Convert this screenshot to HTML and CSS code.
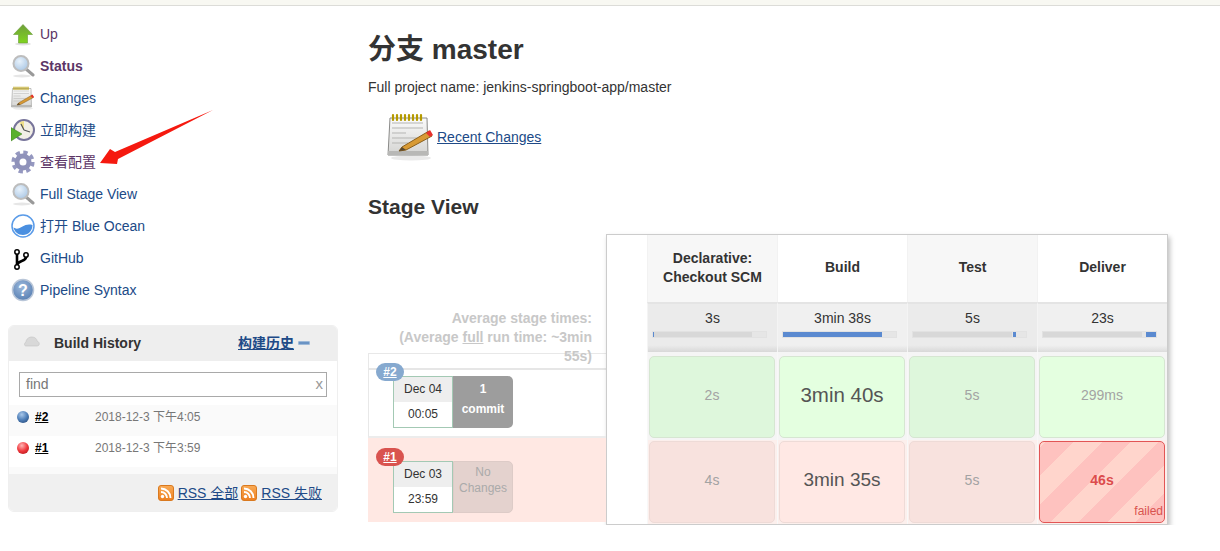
FILE: index.html
```html
<!DOCTYPE html>
<html lang="en">
<head>
  <meta charset="UTF-8">
  <title>分支 master</title>
  <link rel="stylesheet" href="styles.css">
</head>
<body>
  <svg class="sprite" aria-hidden="true">
    <defs>
      <linearGradient id="g-green" x1="0" y1="0" x2="0" y2="1"><stop offset="0" stop-color="#6f9f3a"/><stop offset="1" stop-color="#7fd41e"/></linearGradient>
      <radialGradient id="g-lens" cx=".4" cy=".35" r=".7"><stop offset="0" stop-color="#e8f2fb"/><stop offset="1" stop-color="#a9c6e4"/></radialGradient>
      <linearGradient id="g-paper" x1="0" y1="0" x2="0" y2="1"><stop offset="0" stop-color="#fbfbfb"/><stop offset="1" stop-color="#d4d4d2"/></linearGradient>
      <linearGradient id="g-rss" x1="0" y1="0" x2="0" y2="1"><stop offset="0" stop-color="#f9ab56"/><stop offset="1" stop-color="#ee7f1f"/></linearGradient>
      <radialGradient id="g-help" cx=".45" cy=".35" r=".75"><stop offset="0" stop-color="#9db9dc"/><stop offset="1" stop-color="#4f78ad"/></radialGradient>
      <radialGradient id="g-blue" cx=".4" cy=".3" r=".75"><stop offset="0" stop-color="#a9c8ea"/><stop offset=".6" stop-color="#4f7fb8"/><stop offset="1" stop-color="#2f5688"/></radialGradient>
      <radialGradient id="g-red" cx=".4" cy=".3" r=".75"><stop offset="0" stop-color="#ffb5b5"/><stop offset=".6" stop-color="#f03a3f"/><stop offset="1" stop-color="#c01a20"/></radialGradient>
      <symbol id="i-search" viewBox="0 0 24 24">
        <ellipse cx="11" cy="22" rx="9" ry="1.5" fill="#e6e6e6"/>
        <line x1="15" y1="15" x2="22" y2="21" stroke="#999" stroke-width="3" stroke-linecap="round"/>
        <circle cx="10" cy="9.500" r="7.500" fill="url(#g-lens)" stroke="#bdbdbd" stroke-width="2"/>
      </symbol>
      <symbol id="i-notepad" viewBox="0 0 48 48">
        <ellipse cx="24" cy="45" rx="20" ry="2.500" fill="#eaeaea"/>
        <path d="M3 5h37l1 37H1z" fill="url(#g-paper)" stroke="#8a8a88" stroke-width="1"/>
        <path d="M1 38h40v4H1z" fill="#b8b8b6"/>
        <path d="M5 10h31M5 15h31M5 20h14M5 25h25M5 30h16" stroke="#b5b5b3" stroke-width="1"/>
        <path d="M6 2v5M10 2v5M14 2v5M18 2v5M22 2v5M26 2v5M30 2v5M34 2v5" stroke="#b59a00" stroke-width="2.200" stroke-linecap="round"/>
        <path d="M15 34l27-16 3 5-26 14-7 1z" fill="#d89a34" stroke="#8a5f1c" stroke-width="1"/>
        <path d="M39 20l4-3 3 5-3 2z" fill="#e8302c"/>
        <path d="M15 34l-3 4 7-1z" fill="#5a4a30"/>
      </symbol>
      <symbol id="i-rss" viewBox="0 0 16 16">
        <rect x=".5" y=".5" width="15" height="15" rx="2.500" fill="url(#g-rss)" stroke="#d9791f" stroke-width="1"/>
        <circle cx="4.500" cy="11.500" r="1.700" fill="#fff"/>
        <path d="M3 7a6 6 0 0 1 6 6M3 3.500a9.500 9.500 0 0 1 9.500 9.500" fill="none" stroke="#fff" stroke-width="1.900"/>
      </symbol>
    </defs>
  </svg>

  <div class="top-strip"></div>

  <div class="page">
    <aside class="side">
      <nav class="tasks">
        <a class="task visited" href="#">
          <svg class="task-icon" viewBox="0 0 24 24">
            <ellipse cx="12" cy="22" rx="8" ry="1.500" fill="#e2e2e2"/>
            <path d="M12 2.500l9.500 10h-5v8.500h-9v-8.500h-5z" fill="url(#g-green)" stroke="#6a9a3a" stroke-width=".6"/>
          </svg>
          <span>Up</span>
        </a>
        <a class="task visited current" href="#">
          <svg class="task-icon"><use href="#i-search"/></svg>
          <span>Status</span>
        </a>
        <a class="task" href="#">
          <svg class="task-icon"><use href="#i-notepad"/></svg>
          <span>Changes</span>
        </a>
        <a class="task" href="#">
          <svg class="task-icon" viewBox="0 0 24 24">
            <circle cx="13" cy="12" r="10" fill="#f2efe6" stroke="#77749a" stroke-width="2"/>
            <path d="M13 12L8.500 4.500A9 9 0 0 1 13 3z" fill="#f0e08a"/>
            <path d="M13 12l-3-6M13 12l6 2" stroke="#555" stroke-width="1.200"/>
            <path d="M0 9.500l11 6.500L0 23z" fill="#59b02c" stroke="#3f7f20" stroke-width=".5"/>
          </svg>
          <span>立即构建</span>
        </a>
        <a class="task visited" href="#">
          <svg class="task-icon" viewBox="0 0 24 24">
            <circle cx="12" cy="12" r="9.800" fill="none" stroke="#9598c0" stroke-width="3.600" stroke-dasharray="4.300 3.400"/>
            <circle cx="12" cy="12" r="6" fill="none" stroke="#8f92ba" stroke-width="5"/>
          </svg>
          <span>查看配置</span>
        </a>
        <a class="task" href="#">
          <svg class="task-icon"><use href="#i-search"/></svg>
          <span>Full Stage View</span>
        </a>
        <a class="task" href="#">
          <svg class="task-icon" viewBox="0 0 24 24">
            <circle cx="12" cy="12" r="11" fill="#fff" stroke="#5a9be8" stroke-width="1.500"/>
            <path d="M2.500 13.500c3 2.200 6 .8 9-1s6-2.500 10-1.500c0 6-4.500 10-9.500 10s-8.700-3.500-9.500-7.500z" fill="#4a8fe0"/>
          </svg>
          <span>打开 Blue Ocean</span>
        </a>
        <a class="task" href="#">
          <svg class="task-icon" viewBox="0 0 24 24">
            <path d="M6 8v11M15 11c0 5-8 3-9 8" fill="none" stroke="#000" stroke-width="2.600"/>
            <circle cx="6" cy="6" r="2.200" fill="#fff" stroke="#000" stroke-width="1.500"/>
            <circle cx="6" cy="21" r="2.200" fill="#fff" stroke="#000" stroke-width="1.500"/>
            <circle cx="15" cy="9" r="2.200" fill="#fff" stroke="#000" stroke-width="1.500"/>
          </svg>
          <span>GitHub</span>
        </a>
        <a class="task" href="#">
          <svg class="task-icon" viewBox="0 0 24 24">
            <circle cx="12" cy="12" r="10.500" fill="url(#g-help)" stroke="#b9c6d8" stroke-width="1.500"/>
            <text class="help-mark" x="12" y="17.500" text-anchor="middle">?</text>
          </svg>
          <span>Pipeline Syntax</span>
        </a>
      </nav>

      <section class="history">
        <header class="history-head">
          <svg class="cloud" viewBox="0 0 16 12">
            <path d="M2 11c-2 0-2-3 0-4 0-3 3-5 6-5 3 0 5 2 5 4 3 1 3 5 0 5z" fill="#d8d8d8" stroke="#c4c4c4" stroke-width=".6"/>
          </svg>
          <span class="history-title">Build History</span>
          <a class="trend-link" href="#">构建历史</a>
          <span class="collapse"></span>
        </header>
        <div class="history-search">
          <div class="find-box"><span>find</span><span class="find-x">x</span></div>
        </div>
        <div class="build-row shaded">
          <svg class="ball" viewBox="0 0 14 14"><circle cx="7" cy="7" r="6" fill="url(#g-blue)"/></svg>
          <a class="build-num" href="#">#2</a>
          <span class="build-date">2018-12-3 下午4:05</span>
        </div>
        <div class="build-row">
          <svg class="ball" viewBox="0 0 14 14"><circle cx="7" cy="7" r="6" fill="url(#g-red)"/></svg>
          <a class="build-num" href="#">#1</a>
          <span class="build-date">2018-12-3 下午3:59</span>
        </div>
        <div class="history-gap"></div>
        <footer class="history-foot">
          <svg class="rss"><use href="#i-rss"/></svg>
          <a href="#">RSS 全部</a>
          <svg class="rss"><use href="#i-rss"/></svg>
          <a href="#">RSS 失败</a>
        </footer>
      </section>
    </aside>

    <main class="main">
      <h1>分支 master</h1>
      <p class="full-name">Full project name: jenkins-springboot-app/master</p>
      <div class="recent">
        <svg class="recent-icon"><use href="#i-notepad"/></svg>
        <a href="#">Recent Changes</a>
      </div>
      <h2>Stage View</h2>

      <div class="stage-view">
        <div class="runs">
          <div class="avg-note">
            Average stage times:<br>
            (Average <u>full</u> run time: ~3min 55s)
          </div>
          <div class="runs-top"></div>
          <div class="run">
            <a class="run-badge badge-blue" href="#">#2</a>
            <div class="run-date"><span class="day">Dec 04</span><span class="time">00:05</span></div>
            <div class="run-changes has-commit"><b>1</b><b>commit</b></div>
          </div>
          <div class="run run-failed">
            <a class="run-badge badge-red" href="#">#1</a>
            <div class="run-date"><span class="day">Dec 03</span><span class="time">23:59</span></div>
            <div class="run-changes no-changes"><span>No</span><span>Changes</span></div>
          </div>
        </div>

        <div class="stage-table">
          <div class="blank"></div>
          <div class="stage-name odd">Declarative:<br>Checkout SCM</div>
          <div class="stage-name">Build</div>
          <div class="stage-name odd">Test</div>
          <div class="stage-name">Deliver</div>

          <div class="avg odd">3s<div class="bar"><i style="margin-left:0;width:1%"></i></div></div>
          <div class="avg">3min 38s<div class="bar"><i style="margin-left:0;width:88%"></i></div></div>
          <div class="avg odd">5s<div class="bar"><i style="margin-left:88.500%;width:2.700%"></i></div></div>
          <div class="avg">23s<div class="bar"><i style="margin-left:91%;width:9%"></i></div></div>

          <div class="slot"><div class="cell ok odd">2s</div></div>
          <div class="slot"><div class="cell ok big">3min 40s</div></div>
          <div class="slot"><div class="cell ok odd">5s</div></div>
          <div class="slot"><div class="cell ok">299ms</div></div>

          <div class="slot slot-failed"><div class="cell bad odd">4s</div></div>
          <div class="slot slot-failed"><div class="cell bad mid">3min 35s</div></div>
          <div class="slot slot-failed"><div class="cell bad odd">5s</div></div>
          <div class="slot slot-failed"><div class="cell failed">46s<span class="failed-tag">failed</span></div></div>
        </div>
      </div>
    </main>
  </div>

  <!-- red annotation drawn on top of the screenshot -->
  <svg class="mark-arrow" viewBox="0 0 120 60">
    <path d="M115 1L17 43l-5-3L2 54l17 1 1-5z" fill="#f5190f"/>
  </svg>
</body>
</html>
```

FILE: styles.css
```css
* {
  box-sizing: border-box;
}
body {
  margin: 0;
  background: #fff;
  color: #333;
  font-family: "Liberation Sans", "Noto Sans CJK SC", sans-serif;
  font-size: 14px;
}
a {
  color: #204a87;
}
.sprite {
  display: block;
  width: 0;
  height: 0;
}
.top-strip {
  height: 6px;
  background: #f8f8f2;
  border-bottom: 1px solid #dcdcd8;
}
.page {
  display: flex;
}
.mark-arrow {
  position: absolute;
  left: 98px;
  top: 109px;
  width: 120px;
  height: 60px;
}

/* left side */
.side {
  width: 368px;
  flex: none;
  padding: 12px 0 0 8px;
}
.task {
  display: flex;
  align-items: center;
  gap: 5px;
  height: 32px;
  padding-left: 3px;
  line-height: 16px;
  text-decoration: none;
}
.task span {
  height: 16px;
}
.task.visited {
  color: #5c3566;
}
.task.current {
  font-weight: bold;
}
.task-icon {
  width: 24px;
  height: 24px;
  flex: none;
}
.help-mark {
  fill: #fff;
  font-size: 16px;
  font-weight: bold;
  font-family: "Liberation Sans", sans-serif;
}

.history {
  width: 330px;
  margin-top: 19px;
  border: 1px solid #efefef;
  border-radius: 6px;
  overflow: hidden;
}
.history-head {
  display: flex;
  align-items: center;
  height: 35px;
  padding: 0 0 2px 15px;
  background: #eee;
}
.cloud {
  width: 16px;
  height: 12px;
  margin-right: 14px;
  margin-top: -4px;
}
.history-title {
  width: 184px;
  font-weight: bold;
}
.trend-link {
  font-weight: bold;
  line-height: 16px;
}
.collapse {
  width: 12px;
  height: 4px;
  margin-left: 4px;
  border: 1px solid #9db9d8;
  background: #6a93c4;
  border-radius: 1px;
}
.history-search {
  height: 44px;
  padding: 11px 10px 0;
}
.find-box {
  display: flex;
  justify-content: space-between;
  align-items: center;
  width: 308px;
  height: 25px;
  padding: 0 3px 2px 6px;
  border: 1px solid #a9a9a9;
  color: #777;
}
.find-x {
  color: #999;
  font-size: 15px;
}
.build-row {
  display: flex;
  align-items: center;
  height: 31px;
  padding: 0 0 7px 7px;
  line-height: 16px;
}
.build-row.shaded {
  background: #fafafa;
}
.ball {
  width: 14px;
  height: 14px;
  margin-right: 5px;
}
.build-num {
  width: 60px;
  color: #000;
  font-weight: bold;
  font-size: 12px;
}
.build-date {
  color: #777;
  font-size: 12px;
}
.history-gap {
  height: 7px;
  background: #fafafa;
}
.history-foot {
  display: flex;
  justify-content: flex-end;
  align-items: center;
  height: 37px;
  padding-right: 15px;
  background: #f0f0f0;
  line-height: 16px;
}
.rss {
  width: 16px;
  height: 16px;
  margin-left: 3px;
  margin-right: 4px;
}

/* main column */
.main {
  flex: 1;
}
h1 {
  margin: 25px 0 0;
  font-size: 28px;
  line-height: 38px;
}
.full-name {
  margin: 8px 0 0;
  line-height: 20px;
}
.recent {
  display: flex;
  align-items: center;
  height: 48px;
  margin-top: 16px;
  padding-left: 19px;
}
.recent-icon {
  width: 48px;
  height: 48px;
  margin-right: 2px;
}
h2 {
  margin: 32px 0 0;
  font-size: 21px;
  line-height: 28px;
}

.stage-view {
  display: flex;
  margin-top: 13px;
}
.runs {
  width: 238px;
  flex: none;
}
.avg-note {
  height: 119px;
  padding: 75px 14px 0 20px;
  color: #c8c8c8;
  font-weight: bold;
  line-height: 19px;
  text-align: right;
}
.runs-top {
  height: 17px;
  border: 1px solid #e8e8e8;
  border-bottom: 2px solid #e6e6e6;
  border-right: 0;
}
.run {
  position: relative;
  display: flex;
  height: 68px;
  padding: 6px 0 0 24px;
  border-left: 1px solid #e8e8e8;
  border-bottom: 2px solid #ececec;
}
.run-failed {
  height: 84px;
  padding: 23px 0 0 25px;
  border: 0;
  background: #ffe8e3;
}
.run-badge {
  position: absolute;
  left: 7px;
  top: -7px;
  width: 28px;
  height: 18px;
  border-radius: 9px;
  color: #fff;
  font-size: 12px;
  font-weight: bold;
  line-height: 18px;
  text-align: center;
}
.run-failed .run-badge {
  left: 8px;
  top: 10px;
}
.badge-blue {
  background: #86a9cf;
}
.badge-red {
  background: #d9534f;
}
.run-date {
  display: flex;
  flex-direction: column;
  width: 60px;
  height: 52px;
  border: 1px solid #a3c9b4;
  background: #fff;
  font-size: 12px;
  text-align: center;
}
.run-date span {
  flex: 1;
  line-height: 25px;
}
.run-date .day {
  background: #eee;
}
.run-changes {
  display: flex;
  flex-direction: column;
  width: 60px;
  height: 52px;
  border-radius: 0 5px 5px 0;
  font-size: 12px;
  line-height: 20px;
  text-align: center;
}
.has-commit {
  padding-top: 3px;
  background: #9d9d9d;
  color: #fff;
}
.no-changes {
  line-height: 16px;
  padding-top: 2px;
  background: #e4d2ce;
  border: 1px solid #ddcbc7;
  color: #aaa;
}

/* stage grid */
.stage-table {
  display: grid;
  grid-template-columns: 40px repeat(4, 130px);
  grid-template-rows: 67px 50px 88px 84px;
  width: 562px;
  height: 291px;
  border: 1px solid #ccc;
  background: #fff;
  box-shadow: 2px 3px 5px rgba(0, 0, 0, .25);
}
.blank {
  grid-row: 1 / 5;
}
.stage-name {
  display: flex;
  align-items: center;
  justify-content: center;
  padding-bottom: 2px;
  border-left: 1px solid #f2f2f2;
  font-weight: bold;
  line-height: 19px;
  text-align: center;
}
.stage-name.odd {
  background: #f7f7f7;
}
.avg {
  padding-top: 5px;
  border-left: 1px solid #f4f4f4;
  border-top: 2px solid #e4e4e4;
  background: linear-gradient(#f0f0f0 86%, #dcdcdc);
  line-height: 18px;
  text-align: center;
}
.avg.odd {
  background: linear-gradient(#ebebeb 86%, #d8d8d8);
}
.bar {
  width: 113px;
  height: 5px;
  margin: 5px 0 0 5px;
  background: linear-gradient(to right, #d8d8d8 88%, #e6e6e6 88%);
  box-shadow: 0 0 0 1px #e2e2e2;
}
.bar i {
  display: block;
  height: 5px;
  background: #5b8ad0;
}
.slot {
  padding: 4px 2px 2px 2px;
  background: #f5f5f5;
  border-left: 1px solid #f8f8f8;
}
.slot-failed {
  padding: 1px 2px;
  background: #fcefec;
}
.cell {
  position: relative;
  display: flex;
  align-items: center;
  justify-content: center;
  height: 100%;
  margin-left: -1px;
  padding-bottom: 4px;
  border: 1px solid #ddd;
  border-radius: 5px;
  color: #a3a3a3;
}
.ok {
  background: #e4ffe0;
  border-color: #d6e6d2;
}
.ok.odd {
  background: #def7dc;
}
.bad {
  background: #ffe8e4;
  border-color: #eedbd7;
}
.bad.odd {
  background: #f8e2de;
}
.big {
  color: #555;
  font-size: 20.500px;
}
.mid {
  color: #555;
  font-size: 19px;
}
.failed {
  border: 1px solid #e25555;
  background: repeating-linear-gradient(135deg, #fec2bf 4px 24px, #ffd5cc 24px 44px);
  color: #dc4c4c;
  font-weight: bold;
}
.failed-tag {
  position: absolute;
  right: 1px;
  bottom: 4px;
  color: #d9534f;
  font-size: 12px;
  font-weight: normal;
}
```
